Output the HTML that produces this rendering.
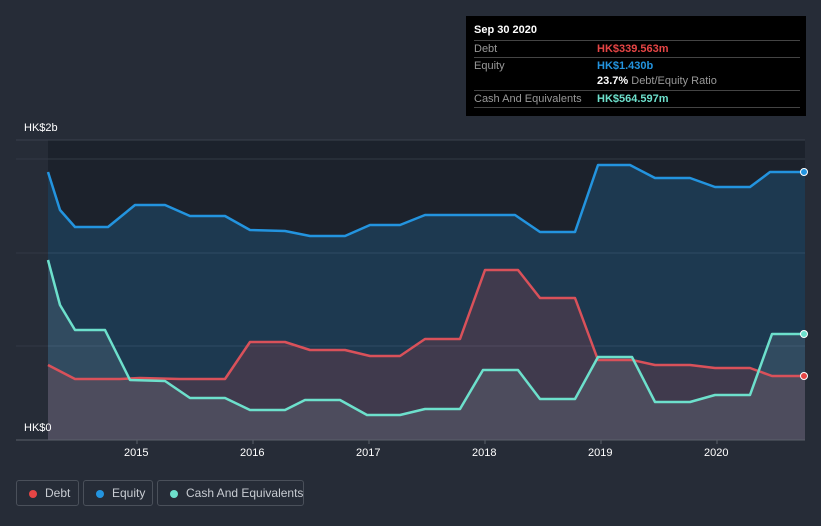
<!DOCTYPE html>
<html><head><style>
body{margin:0;width:821px;height:526px;background:#262c37;font-family:"Liberation Sans",sans-serif;overflow:hidden;position:relative}
.tt{position:absolute;left:466px;top:16px;width:340px;height:100px;background:#000;color:#fff;font-size:11px}
.tt .r{position:absolute;left:8px;width:326px;border-top:1px solid #444;height:16px;line-height:16px;color:#999}
.tt .v{position:absolute;left:123px;font-weight:bold}
.lg{position:absolute;top:480px;height:26px;border:1px solid #4a505a;border-radius:3px;color:#c8ccd2;font-size:12px;line-height:25px;box-sizing:border-box;white-space:nowrap}
.lg i{position:absolute;left:12px;top:9px;width:8px;height:8px;border-radius:50%}
.ax{position:absolute;color:#fff;font-size:11px}
</style></head><body>
<svg width="821" height="526" style="position:absolute;left:0;top:0">
<rect x="48" y="140" width="757" height="300" fill="#1c222c"/>
<line x1="16" y1="140" x2="805" y2="140" stroke="#3a414c"/>
<line x1="16" y1="159" x2="805" y2="159" stroke="#323945"/>
<line x1="16" y1="253" x2="805" y2="253" stroke="#323945"/>
<line x1="16" y1="346" x2="805" y2="346" stroke="#323945"/>
<polygon fill="rgba(35,148,223,0.2)" points="48,172 60,210 75,227 108,227 135,205 165,205 190,216 225,216 250,230 285,231 310,236 345,236 370,225 400,225 425,215 515,215 540,232 575,232 598,165 630,165 655,178 690,178 715,187 750,187 770,172 805,172 805,440 48,440"/>
<polygon fill="rgba(230,69,69,0.18)" points="48,365 75,379 120,379 140,378 180,379 225,379 250,342 285,342 310,350 345,350 370,356 400,356 425,339 460,339 485,270 518,270 540,298 575,298 598,360 632,360 655,365 690,365 715,368 750,368 772,376 805,376 805,440 48,440"/>
<polygon fill="rgba(130,150,160,0.2)" points="48,260 60,305 75,330 105,330 130,380 165,381 190,398 225,398 250,410 285,410 305,400 340,400 367,415 400,415 425,409 460,409 483,370 518,370 540,399 575,399 598,357 632,357 655,402 690,402 715,395 750,395 772,334 805,334 805,440 48,440"/>
<polyline fill="none" stroke="#2394df" stroke-width="2.5" stroke-linejoin="round" points="48,172 60,210 75,227 108,227 135,205 165,205 190,216 225,216 250,230 285,231 310,236 345,236 370,225 400,225 425,215 515,215 540,232 575,232 598,165 630,165 655,178 690,178 715,187 750,187 770,172 805,172"/>
<polyline fill="none" stroke="#d9515a" stroke-width="2.5" stroke-linejoin="round" points="48,365 75,379 120,379 140,378 180,379 225,379 250,342 285,342 310,350 345,350 370,356 400,356 425,339 460,339 485,270 518,270 540,298 575,298 598,360 632,360 655,365 690,365 715,368 750,368 772,376 805,376"/>
<polyline fill="none" stroke="#6de0cc" stroke-width="2.5" stroke-linejoin="round" points="48,260 60,305 75,330 105,330 130,380 165,381 190,398 225,398 250,410 285,410 305,400 340,400 367,415 400,415 425,409 460,409 483,370 518,370 540,399 575,399 598,357 632,357 655,402 690,402 715,395 750,395 772,334 805,334"/>
<circle cx="804" cy="172" r="3.5" fill="#2394df" stroke="#fff"/>
<circle cx="804" cy="334" r="3.5" fill="#6de0cc" stroke="#fff"/>
<circle cx="804" cy="376" r="3.5" fill="#e64545" stroke="#fff"/>
<line x1="16" y1="440" x2="805" y2="440" stroke="#5a606a"/>
<g stroke="#5a606a"><line x1="137" y1="440" x2="137" y2="444"/><line x1="253" y1="440" x2="253" y2="444"/><line x1="369" y1="440" x2="369" y2="444"/><line x1="485" y1="440" x2="485" y2="444"/><line x1="601" y1="440" x2="601" y2="444"/><line x1="717" y1="440" x2="717" y2="444"/></g>
</svg>
<div class="ax" style="left:24px;top:122px">HK$2b</div>
<div class="ax" style="left:24px;top:422px">HK$0</div>
<div class="ax" style="left:124px;top:447px">2015</div>
<div class="ax" style="left:240px;top:447px">2016</div>
<div class="ax" style="left:356px;top:447px">2017</div>
<div class="ax" style="left:472px;top:447px">2018</div>
<div class="ax" style="left:588px;top:447px">2019</div>
<div class="ax" style="left:704px;top:447px">2020</div>
<div class="tt">
<div style="position:absolute;left:8px;top:8px;font-weight:bold">Sep 30 2020</div>
<div class="r" style="top:24px">Debt<span class="v" style="color:#e64545">HK$339.563m</span></div>
<div class="r" style="top:41px">Equity<span class="v" style="color:#2394df">HK$1.430b</span></div>
<div class="r" style="top:57px;border-top:none"><span class="v" style="color:#fff">23.7% <span style="color:#999;font-weight:normal">Debt/Equity Ratio</span></span></div>
<div class="r" style="top:74px;border-bottom:1px solid #444">Cash And Equivalents<span class="v" style="color:#6de0cc">HK$564.597m</span></div>
</div>
<div class="lg" style="left:16px;width:63px"><i style="background:#e64545"></i><span style="margin-left:28px">Debt</span></div>
<div class="lg" style="left:83px;width:70px"><i style="background:#2394df"></i><span style="margin-left:28px">Equity</span></div>
<div class="lg" style="left:157px;width:147px"><i style="background:#6de0cc"></i><span style="margin-left:28px">Cash And Equivalents</span></div>
</body></html>
